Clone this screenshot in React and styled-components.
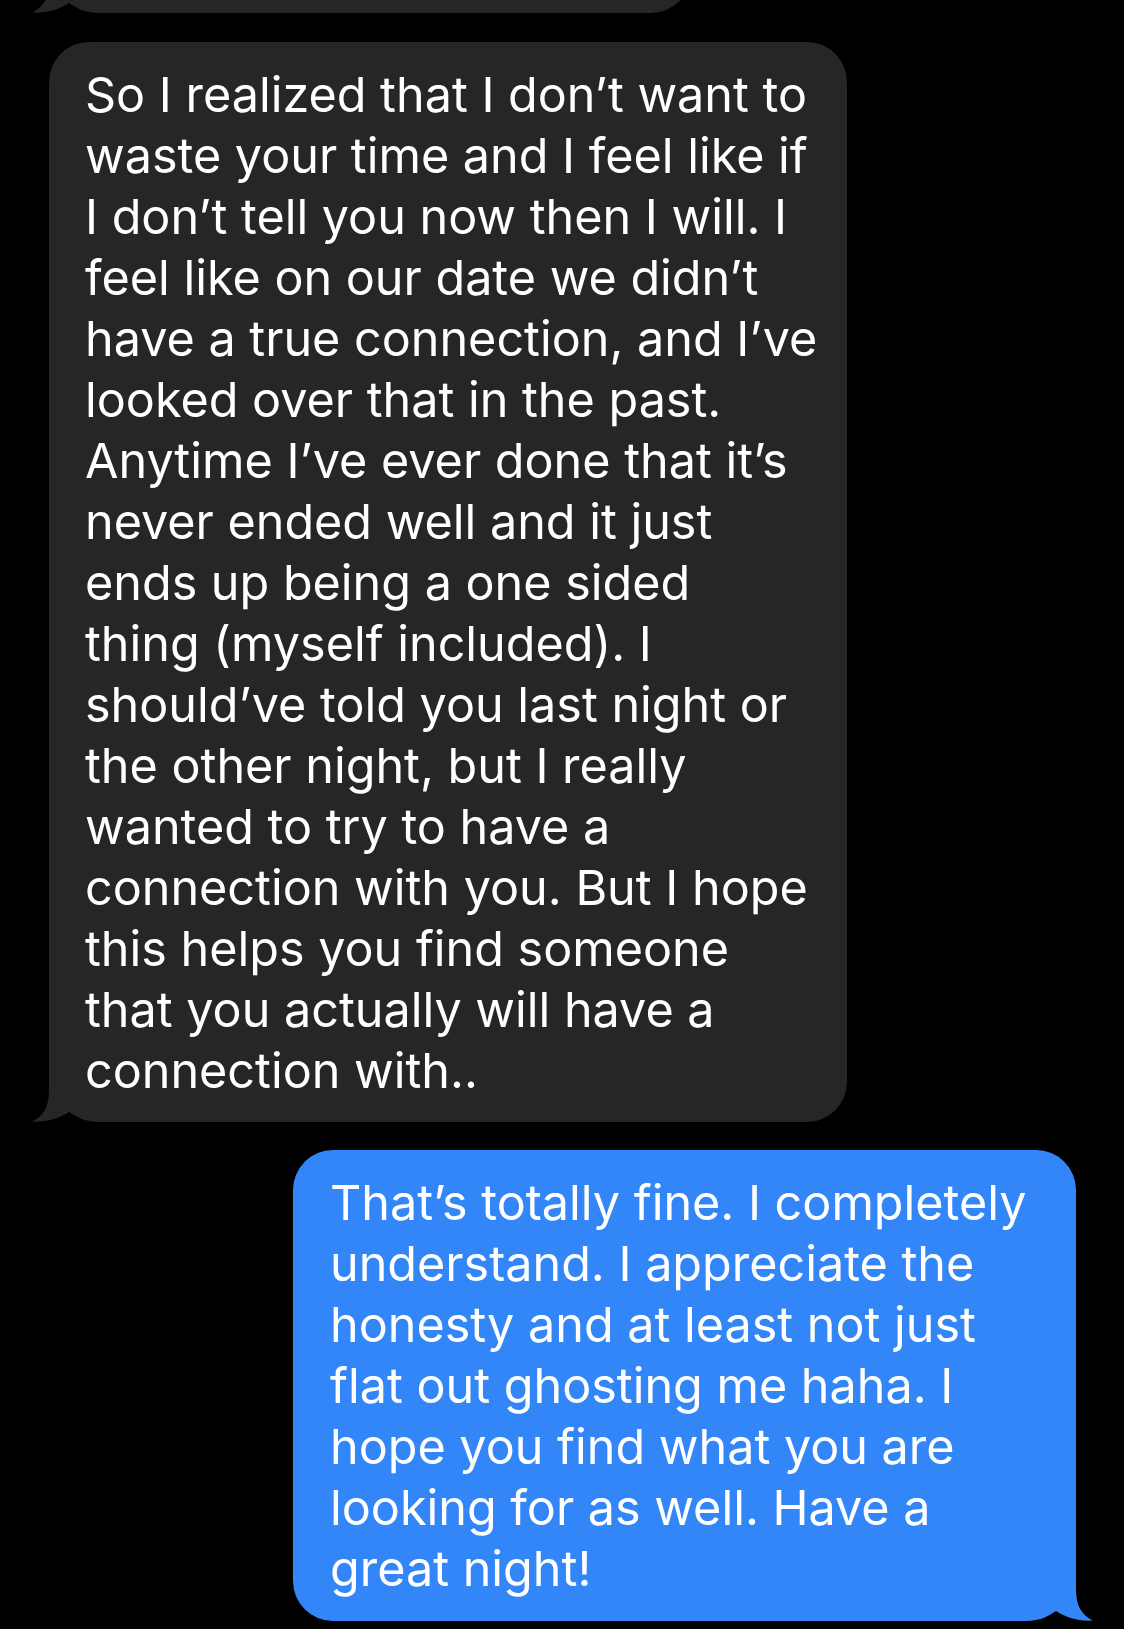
import React from "react";
import styled, { createGlobalStyle } from "styled-components";

const GlobalStyle = createGlobalStyle`
  html, body {
    margin: 0;
    padding: 0;
    background: #000;
  }
  body {
    font-family: Inter, "Noto Sans", "Liberation Sans", sans-serif;
    -webkit-font-smoothing: antialiased;
  }
`;

const colors = {
  in: "#262629",
  out: "#3386f8",
};

const Thread = styled.div`
  display: flex;
  flex-direction: column;
  gap: 28.3px;
  padding: 0 48px 8px 49px;
  min-height: 1629px;
  box-sizing: border-box;
  overflow: hidden;
`;

const Row = styled.div`
  display: flex;
  justify-content: ${(p) => (p.$out ? "flex-end" : "flex-start")};
`;

const Bubble = styled.div`
  position: relative;
  box-sizing: border-box;
  width: ${(p) => p.$width}px;
  padding: 22px 20px 21.5px ${(p) => (p.$out ? 37 : 36)}px;
  background: ${(p) => (p.$out ? colors.out : colors.in)};
  color: #fff;
  border-radius: 40px;
  ${(p) =>
    p.$out
      ? "border-bottom-right-radius: 50px;"
      : "border-bottom-left-radius: 50px;"}
`;

// only the bottom edge of the previous message is visible
const CutBubble = styled(Bubble)`
  height: 90px;
  margin-top: -76.7px;
`;

const Line = styled.div`
  font-size: 48.5px;
  line-height: 61px;
  font-weight: 400;
  white-space: nowrap;
`;

const TailSvg = styled.svg`
  position: absolute;
  bottom: 0;
  width: 45px;
  height: 52px;
  ${(p) =>
    p.$out
      ? "right: -17px; transform: scaleX(-1);"
      : "left: -17px;"}
`;

function Tail({ out }) {
  return (
    <TailSvg $out={out} viewBox="0 -12 45 52" aria-hidden="true">
      <path
        d="M17 -12 L17 8 C17 24 12 34 0 39.6 C15 40.6 28 36 37 30 L40 -12 Z"
        fill={out ? colors.out : colors.in}
      />
    </TailSvg>
  );
}

const incoming = [
  "So I realized that I don’t want to",
  "waste your time and I feel like if",
  "I don’t tell you now then I will. I",
  "feel like on our date we didn’t",
  "have a true connection, and I’ve",
  "looked over that in the past.",
  "Anytime I’ve ever done that it’s",
  "never ended well and it just",
  "ends up being a one sided",
  "thing (myself included). I",
  "should’ve told you last night or",
  "the other night, but I really",
  "wanted to try to have a",
  "connection with you. But I hope",
  "this helps you find someone",
  "that you actually will have a",
  "connection with..",
];

const outgoing = [
  "That’s totally fine. I completely",
  "understand. I appreciate the",
  "honesty and at least not just",
  "flat out ghosting me haha. I",
  "hope you find what you are",
  "looking for as well. Have a",
  "great night!",
];

function Message({ lines, out, width }) {
  return (
    <Row $out={out}>
      <Bubble $out={out} $width={width}>
        {lines.map((l, i) => (
          <Line key={i}>{l}</Line>
        ))}
        <Tail out={out} />
      </Bubble>
    </Row>
  );
}

export default function App() {
  return (
    <>
      <GlobalStyle />
      <Thread>
        <Row>
          <CutBubble $width={642}>
            <Tail />
          </CutBubble>
        </Row>
        <Message lines={incoming} width={798} />
        <Message lines={outgoing} out width={783} />
      </Thread>
    </>
  );
}
